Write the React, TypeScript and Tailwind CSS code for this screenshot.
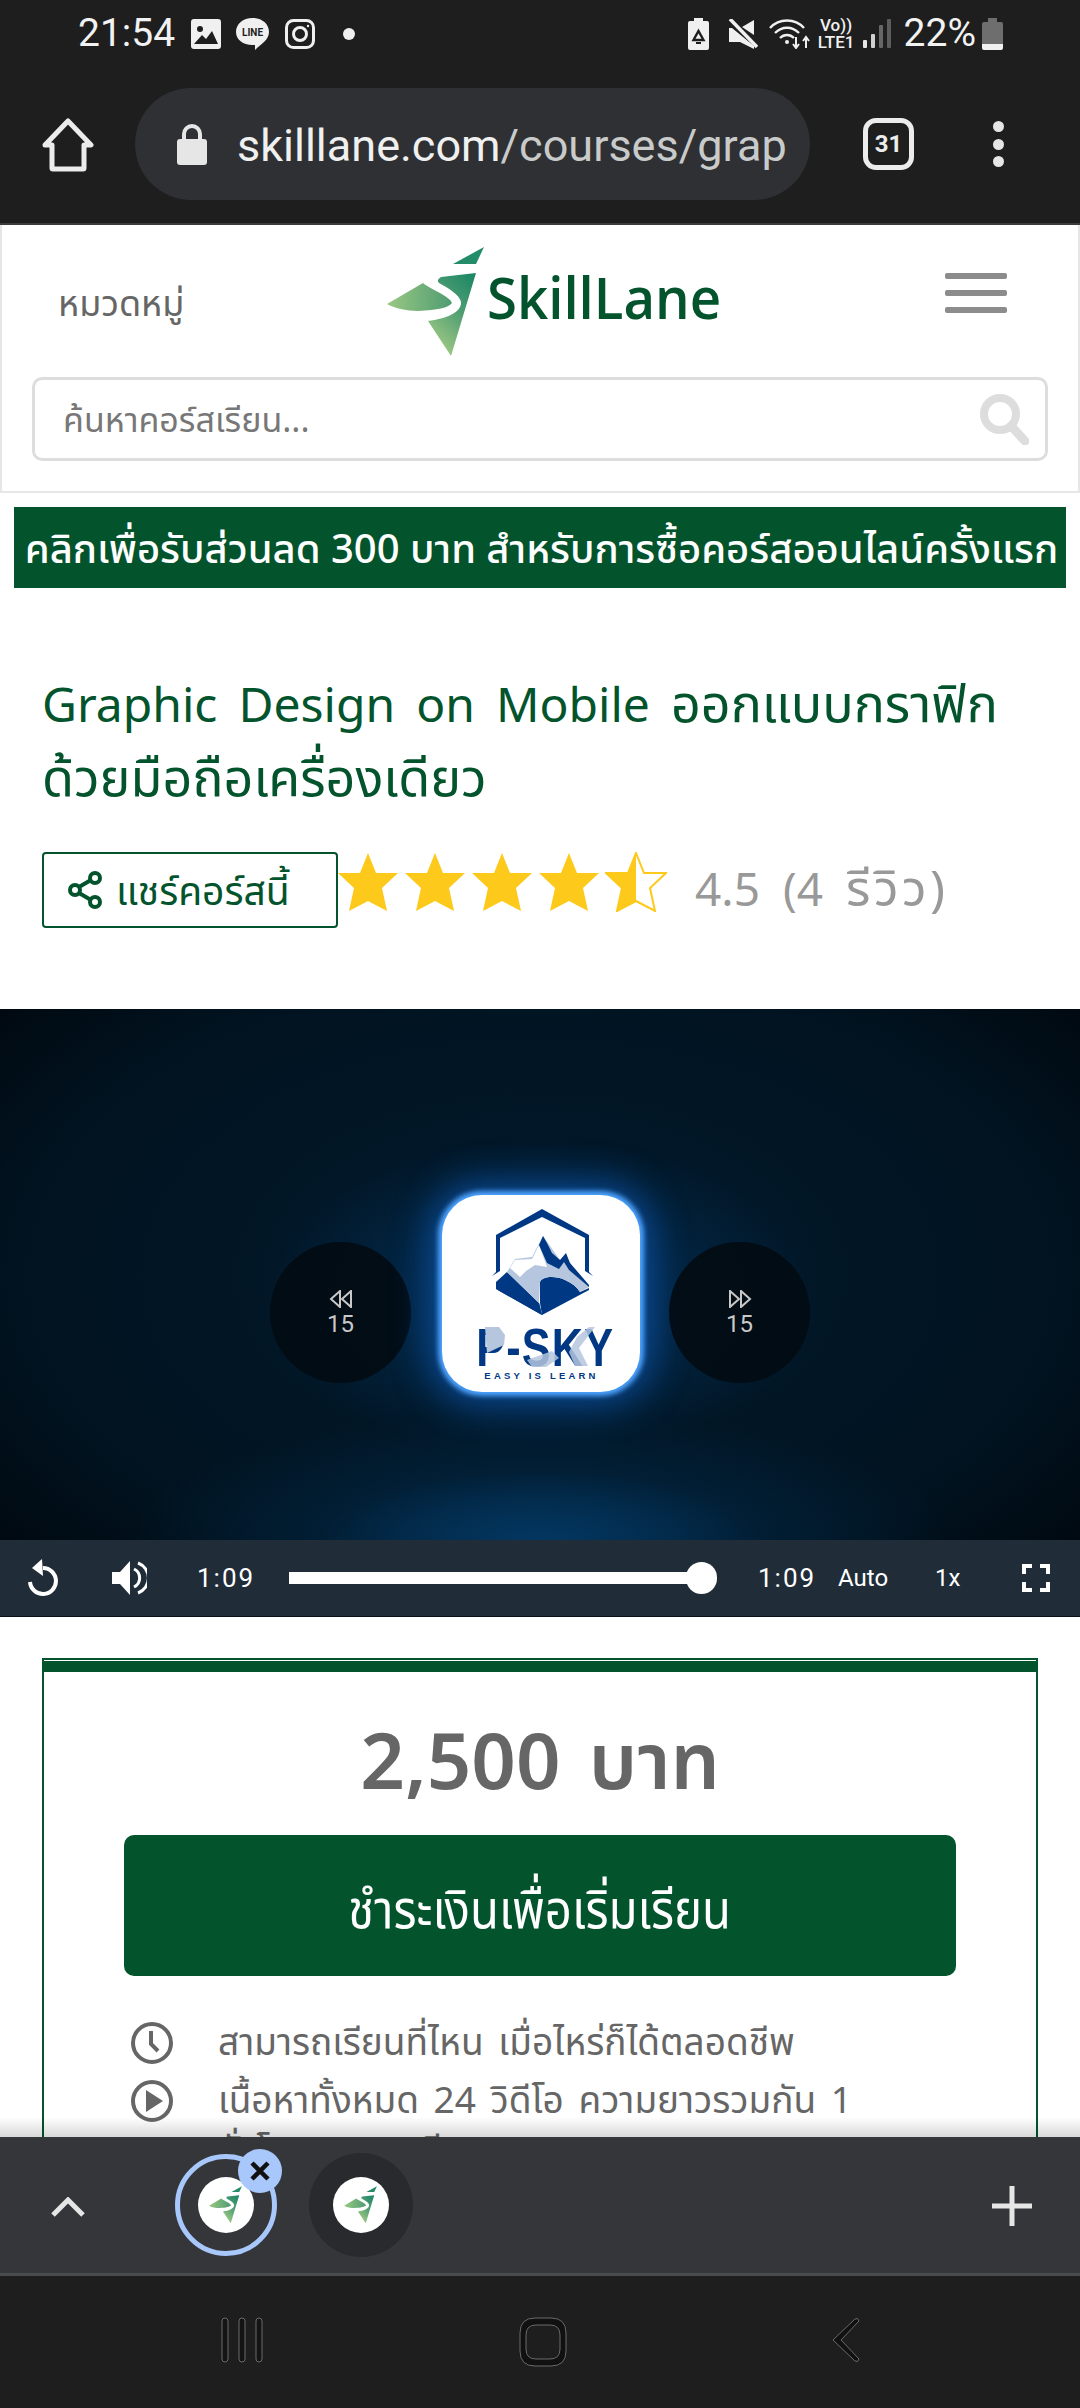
import React from "react";

const thai = "[font-family:'Noto_Sans','Noto_Sans_Thai','Noto_Sans_CJK_SC',sans-serif]";

const SkillMark = ({ className, id }: { className?: string; id: string }) => (
  <svg viewBox="389 246 100 112" className={className}>
    <defs>
      <linearGradient id={`${id}Leaf`} x1="0" y1="0.5" x2="1" y2="0.5">
        <stop offset="0" stopColor="#9ac883" />
        <stop offset="1" stopColor="#4f9c72" />
      </linearGradient>
      <linearGradient id={`${id}Body`} x1="0.9" y1="0" x2="0.35" y2="1">
        <stop offset="0" stopColor="#1b8765" />
        <stop offset="0.45" stopColor="#4f9d72" />
        <stop offset="1" stopColor="#a0ca84" />
      </linearGradient>
    </defs>
    <polygon points="486,247 455,264 478,264" fill="#248c68" />
    <path d="M478 273 L443 277 Q438 280 441 283 C450 288 462 295 463 302 C464 312 448 319 430 321 L453 356 Z" fill={`url(#${id}Body)`} />
    <path d="M389 304 L425 283 C430 288 452 296 454 303 C450 308 440 310 420 311 C408 311 396 308 389 304 Z" fill={`url(#${id}Leaf)`} />
  </svg>
);

const Star = ({ half }: { half?: boolean }) => (
  <svg viewBox="0 0 62 60" className="mr-[5px] h-[60px] w-[62px] shrink-0">
    <polygon
      points="31,1 39,21 61,21 45,36 50,59 31,49 12,59 17,36 1,21 23,21"
      fill={half ? "none" : "#fdc91a"}
      stroke={half ? "#fdc91a" : "none"}
      strokeWidth="2"
    />
    {half && <polygon points="31,1 23,21 1,21 17,36 12,59 31,49" fill="#fdc91a" />}
  </svg>
);

const TabFavicon = ({ id }: { id: string }) => (
  <span className="flex h-14 w-14 items-center justify-center rounded-full bg-white">
    <SkillMark id={id} className="h-[38px] w-[34px]" />
  </span>
);

const StatusBar = () => (
  <div className="flex h-[70px] shrink-0 items-center bg-[#1e1e1e] pl-[78px] pr-[77px] pb-[3px] text-white">
    <span className="[font-family:Roboto,sans-serif] text-[39px] leading-none text-[#f2f2f2]">21:54</span>
    <svg viewBox="0 0 30 30" className="ml-[16px] h-[30px] w-[30px]">
      <rect width="30" height="30" rx="3" fill="#f0f0f0" />
      <circle cx="9" cy="10" r="3" fill="#1e1e1e" />
      <path d="M3 25 L11 16 L15 20 L21 12 L27 25 Z" fill="#1e1e1e" />
    </svg>
    <svg viewBox="0 0 33 32" className="ml-[15px] h-8 w-[33px]">
      <path d="M16.5 0 C26 0 33 6 33 14 C33 22 25 26 19 32 L19 27 C8 28 0 22 0 14 C0 6 7 0 16.5 0 Z" fill="#f0f0f0" />
      <text x="16.5" y="18" textAnchor="middle" fontSize="10" fontWeight="700" fill="#1e1e1e" className="[font-family:Roboto,sans-serif]">LINE</text>
    </svg>
    <svg viewBox="0 0 30 30" className="ml-4 h-[30px] w-[30px]" fill="none" stroke="#f0f0f0" strokeWidth="3">
      <rect x="1.5" y="1.5" width="27" height="27" rx="7" />
      <circle cx="15" cy="15" r="6.5" />
      <circle cx="23" cy="7" r="1.2" fill="#f0f0f0" stroke="none" />
    </svg>
    <span className="ml-[28px] h-3 w-3 rounded-full bg-[#f0f0f0]" />
    <svg viewBox="0 0 21 32" className="ml-auto h-8 w-[21px]">
      <path d="M6 0 H15 V3 H19 Q21 3 21 5 V30 Q21 32 19 32 H2 Q0 32 0 30 V5 Q0 3 2 3 H6 Z" fill="#f0f0f0" />
      <path d="M10.5 13 L15.5 22 H5.5 Z" fill="none" stroke="#1e1e1e" strokeWidth="2.4" />
      <path d="M8 25 H13" stroke="#1e1e1e" strokeWidth="2" />
    </svg>
    <svg viewBox="0 0 30 30" className="ml-[19px] h-[30px] w-[30px]">
      <path d="M26 1 V16 L14 8 Z" fill="#f0f0f0" />
      <path d="M1 9 H4 L26 27 V30 L12 23 H1 Z" fill="#f0f0f0" />
      <path d="M2 0 L29 28" stroke="#f0f0f0" strokeWidth="3.5" />
    </svg>
    <svg viewBox="0 0 42 30" className="ml-[11px] h-[30px] w-[42px]" fill="none" stroke="#f0f0f0" strokeWidth="2.4">
      <path d="M1 9 C10 -1 26 -1 35 9" />
      <path d="M6 14 C13 7 23 7 30 14" />
      <path d="M11 19 C15 15 21 15 25 19" />
      <circle cx="18" cy="23" r="2" fill="#f0f0f0" stroke="none" />
      <path d="M27 18 V29 M24 25 L27 29 L30 25 M37 29 V18 M34 22 L37 18 L40 22" strokeWidth="2" />
    </svg>
    <span className="ml-[6px] flex w-[39px] flex-col items-center [font-family:Roboto,sans-serif] text-[17px] font-medium leading-[17px] text-[#f0f0f0]">
      <span>Vo))</span>
      <span>LTE1</span>
    </span>
    <span className="ml-[7px] flex h-[29px] w-[28px] items-end justify-between">
      <span className="h-[8px] w-[4px] rounded-[1px] bg-[#e6e6e6]" />
      <span className="h-[14px] w-[4px] rounded-[1px] bg-[#d0d0d0]" />
      <span className="h-[23px] w-[4px] rounded-[1px] bg-[#666]" />
      <span className="h-[29px] w-[4px] rounded-[1px] bg-[#5c5c5c]" />
    </span>
    <span className="ml-[13px] [font-family:Roboto,sans-serif] text-[39px] leading-none text-[#f2f2f2]">22%</span>
    <span className="ml-[6px] flex h-8 w-[21px] flex-col items-center">
      <span className="h-[4px] w-[9px] bg-[#6e6e6e]" />
      <span className="h-[22px] w-full rounded-t-[2px] bg-[#6e6e6e]" />
      <span className="h-[6px] w-full rounded-b-[2px] bg-[#f0f0f0]" />
    </span>
  </div>
);

const Toolbar = () => (
  <div className="flex h-[155px] shrink-0 items-start border-b-2 border-[#3b3b3b] bg-[#1e1e1e] pt-[18px]">
    <svg viewBox="0 0 52 54" className="ml-[42px] mt-[30px] h-[54px] w-[52px]" fill="none" stroke="#ececec" strokeWidth="5" strokeLinejoin="round">
      <path d="M26 3 L49 27 H42 V50 Q42 51 41 51 H11 Q10 51 10 50 V27 H3 Z" />
    </svg>
    <div className="ml-[41px] flex h-28 w-[675px] items-center overflow-hidden rounded-full bg-[#2f3033] pl-[41px]">
      <svg viewBox="0 0 32 42" className="h-[42px] w-[32px] shrink-0">
        <path d="M8 18 V11 A8 8 0 0 1 24 11 V18" fill="none" stroke="#e6e6e6" strokeWidth="4" />
        <rect x="1" y="16" width="30" height="26" rx="3" fill="#e6e6e6" />
      </svg>
      <span className="ml-[29px] mt-[3px] whitespace-nowrap [font-family:Roboto,sans-serif] text-[45px] leading-none text-[#c9caca]">
        <span className="text-[#f0f0f0]">skilllane.com</span>/courses/grap
      </span>
    </div>
    <div className="ml-[53px] mt-[30px] flex h-[52px] w-[51px] items-center justify-center rounded-[13px] border-[5px] border-[#ececec] [font-family:Roboto,sans-serif] text-[24px] font-bold leading-none text-[#ececec]">
      31
    </div>
    <div className="ml-[79px] mt-[33px] flex h-[46px] flex-col justify-between">
      <span className="h-[11px] w-[11px] rounded-full bg-[#e6e6e6]" />
      <span className="h-[11px] w-[11px] rounded-full bg-[#e6e6e6]" />
      <span className="h-[11px] w-[11px] rounded-full bg-[#e6e6e6]" />
    </div>
  </div>
);

const SiteHeader = () => (
  <div className={`border-x-2 border-b-2 border-[#e6e6e6] bg-white pt-[4px] ${thai}`}>
    <div className="flex h-[148px] items-start">
      <span className="ml-[56px] mt-[44px] w-[180px] text-[36px] leading-[60px] text-[#666]">หมวดหมู่</span>
      <SkillMark id="head" className="ml-[149px] mt-[17px] h-[112px] w-[100px]" />
      <span className="mt-[28px] origin-left [font-family:'Open_Sans',sans-serif] text-[58px] font-semibold leading-[80px] text-[#03542c] [transform:scaleX(.94)]">SkillLane</span>
      <div className="ml-auto mr-[71px] mt-[44px] flex h-10 w-[62px] flex-col justify-between">
        <span className="h-[6px] rounded-[2px] bg-[#8c8c8c]" />
        <span className="h-[6px] rounded-[2px] bg-[#8c8c8c]" />
        <span className="h-[6px] rounded-[2px] bg-[#8c8c8c]" />
      </div>
    </div>
    <div className="mx-[30px] mb-[30px] flex h-[84px] items-center rounded-[10px] border-[3px] border-[#dddddd] pl-[28px] pr-[16px]">
      <span className="text-[34px] leading-none text-[#777]">ค้นหาคอร์สเรียน...</span>
      <svg viewBox="0 0 50 52" className="ml-auto h-[52px] w-[50px]" fill="none" stroke="#dddddd">
        <circle cx="21" cy="21" r="16" strokeWidth="8" />
        <path d="M32 33 L46 48" strokeWidth="9" strokeLinecap="round" />
      </svg>
    </div>
  </div>
);

const CourseIntro = () => (
  <div className={`bg-white ${thai}`}>
    <div className="mx-[14px] mt-[14px] flex h-[81px] items-center justify-center overflow-hidden whitespace-nowrap bg-[#03542c] pl-[3px] text-[40px] font-medium text-white">
      คลิกเพื่อรับส่วนลด 300 บาท สำหรับการซื้อคอร์สออนไลน์ครั้งแรก
    </div>
    <h1 className="mx-[42px] mt-[78px] h-[146px] w-[956px] text-[48px] font-normal leading-[72px] text-[#03542c]">
      <span className="block [text-align-last:justify]">
        Graphic Design on Mobile <span className="text-[52px]">ออกแบบกราฟิก</span>
      </span>
      <span className="block text-[52px]">ด้วยมือถือเครื่องเดียว</span>
    </h1>
    <div className="ml-[42px] mt-[40px] flex items-start pb-[81px]">
      <div className="flex h-[76px] w-[296px] items-center rounded-[4px] border-2 border-[#03542c] pl-6 text-[39px] text-[#03542c]">
        <svg viewBox="0 0 34 38" className="h-[38px] w-[34px] shrink-0" fill="none" stroke="#03542c" strokeWidth="4">
          <circle cx="7" cy="19" r="5" />
          <circle cx="27" cy="7" r="5" />
          <circle cx="27" cy="31" r="5" />
          <path d="M11 16 L23 9 M11 22 L23 29" />
        </svg>
        <span className="ml-[14px] whitespace-nowrap">แชร์คอร์สนี้</span>
      </div>
      <div className="-ml-[1px] flex">
        <Star />
        <Star />
        <Star />
        <Star />
        <Star half />
      </div>
      <span className="ml-[23px] mt-[5px] h-[60px] whitespace-nowrap text-[46px] leading-[60px] text-[#999] [word-spacing:11px]">
        4.5 (4 <span className="text-[50px] tracking-[3.5px]">รีวิว)</span>
      </span>
    </div>
  </div>
);

const PskyLogo = () => (
  <div className="h-[197px] w-[198px] rounded-[40px] bg-white shadow-[0_0_5px_4px_#4ea4ff,0_0_34px_14px_rgba(18,110,225,.5)]">
    <svg viewBox="0 0 198 197" className="h-full w-full">
      {/* hexagon frame */}
      <path d="M100 14 L147 40 V77 L151 81 L143 76 V43 L100 22 L58 43 V76 L50 81 L54 77 V40 Z" fill="#003884" />
      {/* lower body */}
      <path d="M54 87 L65 77 L97 108 L100 120 L54 94 Z" fill="#003884" />
      <path d="M54 94 L97 108 L100 120 Z" fill="#003884" />
      <path d="M98 87 C100 82 112 80 123 85 C130 88 135 92 138 97 L147 93 V95 L100 120 L98 108 Z" fill="#003884" />
      {/* mountain */}
      <path d="M101 41 L90 62 L73 64 L65 77 L97 108 L98 87 C100 82 112 80 123 85 C130 88 135 92 138 97 L147 92 L128 68 L118 65 Z" fill="#b5c6de" />
      <path d="M73 65 L68 73 L78 82 L84 76 L93 70 L105 72 L97 50 L90 64 Z" fill="#fff" />
      <path d="M101 41 L105 48 L110 58 L118 65 L124 58 L128 68 L147 90 V92 L127 75 L122 67 L117 74 L105 68 L97 50 Z" fill="#003884" />
      <text x="129" y="171" textAnchor="middle" fontSize="54" fontWeight="700" letterSpacing="1.5" fill="#003884" transform="scale(.8 1)" className="[font-family:'Liberation_Sans',sans-serif]">P-SKY</text>
      <polygon points="43,132 57,132 63,140 62,150 45,158" fill="#b5c6de" />
      <polygon points="127,157 135,142 147,132 153,132 137,153 146,171 133,171" fill="#b5c6de" opacity=".85" />
      <polygon points="85,165 110,156 117,163 104,172 90,172" fill="#b5c6de" opacity=".85" />
      <text x="99.5" y="184" textAnchor="middle" fontSize="9.5" fontWeight="700" letterSpacing="3.2" fill="#003884" className="[font-family:'Liberation_Sans',sans-serif]">EASY IS LEARN</text>
    </svg>
  </div>
);

const SkipButton = ({ dir }: { dir: "back" | "forward" }) => (
  <div className="mt-[233px] flex h-[141px] w-[141px] flex-col items-center justify-center rounded-full bg-[#020b12]/90 text-[#c8c8c8]">
    <svg viewBox="0 0 24 18" className={`h-[18px] w-6 ${dir === "back" ? "" : "rotate-180"}`} fill="none" stroke="#c8c8c8" strokeWidth="2">
      <path d="M11 1 L2 9 L11 17 Z M22 1 L13 9 L22 17 Z" />
    </svg>
    <span className="mt-[4px] [font-family:Roboto,sans-serif] text-[24px] leading-[24px]">15</span>
  </div>
);

const VideoControls = () => (
  <div className="flex h-[77px] items-center border-b border-[#0b1016] bg-[#212c39] pl-[28px] [font-family:Roboto,sans-serif] text-[24px] leading-none text-white">
    <svg viewBox="0 0 30 38" className="h-[38px] w-[30px]" fill="none" stroke="#fff" strokeWidth="4">
      <path d="M15 9 A13 13 0 1 1 2 23" />
      <path d="M14 0 L4 9 L15 17 Z" fill="#fff" stroke="none" />
    </svg>
    <svg viewBox="0 0 35 36" className="ml-[54px] h-9 w-[35px]">
      <path d="M0 12 H8 L18 1 V35 L8 24 H0 Z" fill="#fff" />
      <path d="M22 9 A10 10 0 0 1 22 27" fill="none" stroke="#fff" strokeWidth="3" />
      <path d="M26 3 A16 16 0 0 1 26 33" fill="none" stroke="#fff" strokeWidth="3" />
    </svg>
    <span className="ml-[50px] w-[56px] text-[26px] tracking-[2px]">1:09</span>
    <div className="ml-[36px] flex w-[428px] items-center">
      <div className="h-[12px] flex-1 bg-white" />
      <div className="-ml-px h-8 w-[31px] rounded-full bg-white" />
    </div>
    <span className="ml-[41px] w-[57px] text-[26px] tracking-[2px]">1:09</span>
    <span className="ml-[23px] w-[52px]">Auto</span>
    <span className="ml-[45px] w-[30px]">1x</span>
    <svg viewBox="0 0 28 28" className="ml-[57px] h-7 w-7" fill="none" stroke="#fff" strokeWidth="4">
      <path d="M2 10 V2 H10 M18 2 H26 V10 M26 18 V26 H18 M10 26 H2 V18" />
    </svg>
  </div>
);

const Video = () => (
  <div>
    <div className="flex h-[531px] items-start justify-center bg-black bg-[radial-gradient(ellipse_20%_13%_at_50%_100%,#033660,transparent),radial-gradient(ellipse_38%_24%_at_50%_100%,#022a4a,transparent),radial-gradient(ellipse_26%_30%_at_50%_54%,#03315a,transparent),radial-gradient(ellipse_75%_90%_at_50%_50%,#021a2d,#011320_65%,#000307)]">
      <SkipButton dir="back" />
      <div className="ml-[31px] mr-[29px] mt-[186px]">
        <PskyLogo />
      </div>
      <SkipButton dir="forward" />
    </div>
    <VideoControls />
  </div>
);

const PriceCard = () => (
  <div className={`mx-[42px] mt-[41px] border-2 border-[#03542c] bg-white ${thai}`}>
    <div className="mt-px h-[11px] bg-[#03542c]" />
    <div className="mt-[37px] text-center text-[78px] font-semibold leading-[100px] text-[#666] [word-spacing:8px]">2,500 บาท</div>
    <div className="mx-[80px] mt-[26px] flex h-[141px] items-center justify-center rounded-[10px] bg-[#03542c] pt-[4px] text-white">
      <span className="text-[54px] [transform:scaleX(.875)]">ชำระเงินเพื่อเริ่มเรียน</span>
    </div>
    <div className="ml-[86px] mr-[60px] mt-[40px] flex flex-col gap-[8px] text-[37px] leading-[50px] text-[#666] [word-spacing:5px]">
      <div className="flex">
        <svg viewBox="0 0 44 44" className="mt-[5px] h-11 w-11 shrink-0" fill="none" stroke="#666" strokeWidth="4">
          <circle cx="22" cy="22" r="19" />
          <path d="M21 10 V23 L28 30" />
        </svg>
        <span className="ml-[44px] whitespace-nowrap">สามารถเรียนที่ไหน เมื่อไหร่ก็ได้ตลอดชีพ</span>
      </div>
      <div className="flex">
        <svg viewBox="0 0 44 44" className="mt-[5px] h-11 w-11 shrink-0" fill="none" stroke="#666" strokeWidth="4">
          <circle cx="22" cy="22" r="19" />
          <path d="M16 11 L33 22 L16 33 Z" fill="#666" stroke="none" />
        </svg>
        <span className="ml-[44px]">
          เนื้อหาทั้งหมด 24 วิดีโอ ความยาวรวมกัน 1
          <br />
          ชั่วโมง 40 นาที
        </span>
      </div>
    </div>
  </div>
);

const TabStrip = () => (
  <div className="relative flex h-[136px] shrink-0 items-center bg-[#35363a]">
    <div className="pointer-events-none absolute inset-x-0 -top-5 h-5 bg-gradient-to-b from-transparent to-black/15" />
    <svg viewBox="0 0 34 20" className="ml-[51px] mt-[3px] h-5 w-[34px]" fill="none" stroke="#e6e6e6" strokeWidth="5">
      <path d="M2 18 L17 3 L32 18" />
    </svg>
    <div className="relative ml-[90px] flex h-[102px] w-[102px] items-center justify-center rounded-full border-[5px] border-[#a8c7fa]">
      <TabFavicon id="tabA" />
      <span className="absolute -right-[10px] -top-[10px] flex h-[44px] w-[44px] items-center justify-center rounded-full bg-[#a8c7fa]">
        <svg viewBox="0 0 24 24" className="h-6 w-6" fill="none" stroke="#111" strokeWidth="4.5">
          <path d="M4 4 L20 20 M20 4 L4 20" />
        </svg>
      </span>
    </div>
    <div className="ml-[32px] flex h-[104px] w-[104px] items-center justify-center rounded-full bg-[#292a2d]">
      <TabFavicon id="tabB" />
    </div>
    <svg viewBox="0 0 40 40" className="ml-auto mr-[48px] mt-[2px] h-10 w-10" fill="none" stroke="#e6e6e6" strokeWidth="5">
      <path d="M20 0 V40 M0 20 H40" />
    </svg>
  </div>
);

const NavBar = () => (
  <div className="flex h-[135px] shrink-0 items-start border-t-[3px] border-[#4a4b4d] bg-[#1e1e1e] pt-[41px]">
    <svg viewBox="0 0 42 46" className="ml-[221px] h-[46px] w-[42px]" fill="#141414" stroke="#6a6a6a" strokeWidth="1">
      <rect x="1" y="1" width="6" height="44" rx="3" />
      <rect x="18" y="1" width="6" height="44" rx="3" />
      <rect x="35" y="1" width="6" height="44" rx="3" />
    </svg>
    <svg viewBox="0 0 48 50" className="ml-[256px] h-[50px] w-12" fill="#111" stroke="#6a6a6a" strokeWidth="1">
      <path fillRule="evenodd" d="M16 1 H32 Q47 1 47 16 V34 Q47 49 32 49 H16 Q1 49 1 34 V16 Q1 1 16 1 Z M17 8 Q7 8 7 18 V32 Q7 42 17 42 H31 Q41 42 41 32 V18 Q41 8 31 8 Z" />
    </svg>
    <svg viewBox="0 0 28 46" className="ml-[265px] h-[46px] w-7" fill="#111" stroke="#6a6a6a" strokeWidth="1">
      <path d="M23 2 Q26 0 27 4 L9 23 L27 42 Q26 46 23 44 L1 23 Z" />
    </svg>
  </div>
);

export default function App() {
  return (
    <div className="flex h-[2408px] w-[1080px] flex-col overflow-hidden bg-white">
      <StatusBar />
      <Toolbar />
      <main className="min-h-0 flex-1 overflow-hidden">
        <SiteHeader />
        <CourseIntro />
        <Video />
        <PriceCard />
      </main>
      <TabStrip />
      <NavBar />
    </div>
  );
}
